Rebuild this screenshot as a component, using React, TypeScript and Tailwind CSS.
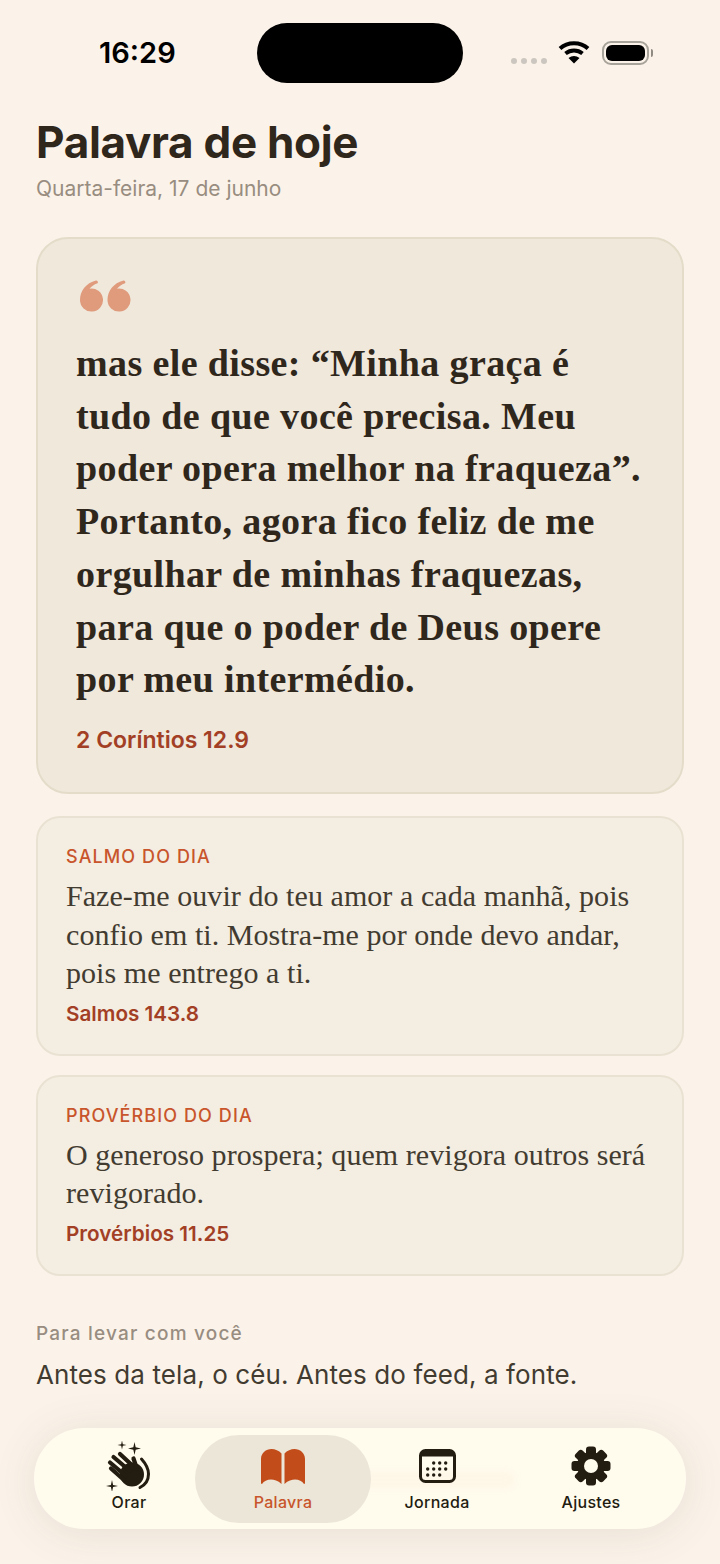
import React from 'react';

const SANS = 'font-[Inter,"Liberation_Sans",sans-serif]';
const SERIF = 'font-["Liberation_Serif",serif]';

function WifiIcon() {
  return (
    <svg width="32" height="24" viewBox="0 0 32 24" fill="none" className="text-black">
      <path d="M2 8.500C9.500 1.500 22.500 1.500 30 8.500" stroke="currentColor" strokeWidth="4" />
      <path d="M7.500 13.500C12.500 9.500 19.500 9.500 24.500 13.500" stroke="currentColor" strokeWidth="4" />
      <path d="M10.500 18L16 23.500L21.500 18C18 15.300 14 15.300 10.500 18Z" fill="currentColor" />
    </svg>
  );
}

function Battery() {
  return (
    <div className="flex items-center gap-[2px]">
      <div className="w-[47px] h-[24px] rounded-[9px] border-2 border-[#a8a39a] p-[2px]">
        <div className="w-full h-full rounded-[6px] bg-black" />
      </div>
      <div className="w-[2px] h-[8px] rounded-r-full bg-[#8f8a82]" />
    </div>
  );
}

function StatusBar() {
  return (
    <div className="flex items-start pt-[23px]">
      <div className={`w-[257px] pl-[99px] pt-[12px] text-[29px] leading-[36px] font-semibold text-black ${SANS}`}>16:29</div>
      <div className="w-[206px] h-[60px] rounded-[30px] bg-black" />
      <div className="flex items-center pl-[48px] pt-[18px]">
        <div className="flex gap-[4px] mt-[16px]">
          <span className="w-[6px] h-[6px] rounded-full bg-[#cbc6bf]" />
          <span className="w-[6px] h-[6px] rounded-full bg-[#cbc6bf]" />
          <span className="w-[6px] h-[6px] rounded-full bg-[#cbc6bf]" />
          <span className="w-[6px] h-[6px] rounded-full bg-[#cbc6bf]" />
        </div>
        <div className="ml-[11px] mr-[12px] -mt-[2px]"><WifiIcon /></div>
        <Battery />
      </div>
    </div>
  );
}

function QuoteMark() {
  const mark = 'M16 0.500C6 3 0 11 0 20A11.500 11.500 0 1 0 9.500 8.700C11 6.500 14 4.500 17.500 3.200C18.500 2.500 17.500 0.200 16 0.500Z';
  return (
    <svg width="51" height="32" viewBox="0 0 51 32" className="text-[#e09a7c]" aria-hidden="true">
      <path d={mark} fill="currentColor" />
      <path d={mark} fill="currentColor" transform="translate(27.500 0)" />
    </svg>
  );
}

function Sparkle({ x, y, r }: { x: number; y: number; r: number }) {
  const s = r * 0.18;
  return (
    <path
      d={`M${x} ${y - r}L${x + s} ${y - s}L${x + r} ${y}L${x + s} ${y + s}L${x} ${y + r}L${x - s} ${y + s}L${x - r} ${y}L${x - s} ${y - s}Z`}
      fill="currentColor"
    />
  );
}

function HandsIcon() {
  return (
    <svg width="46" height="50" viewBox="0 0 46 50" fill="none" className="text-[#231c10]">
      <Sparkle x={16} y={4} r={4.500} />
      <Sparkle x={28.500} y={7.500} r={6.500} />
      <Sparkle x={6} y={45} r={6} />
      <circle cx="26" cy="33.500" r="12" fill="currentColor" />
      <g stroke="currentColor" strokeWidth="4.200" strokeLinecap="round">
        <path d="M5 27.500L18 39" />
        <path d="M4 21.500L20 35" />
        <path d="M7.500 16L24 30" />
        <path d="M14 13L28 26" />
        <path d="M27.500 17.500L31 28" />
      </g>
      <path d="M35.500 18C40 23 42.500 28 42.500 33C42.500 39 39 44 34 46.500" stroke="currentColor" strokeWidth="3" strokeLinecap="round" />
    </svg>
  );
}

function BookIcon() {
  const page = 'M0 34.500V10C0 4 5 0 10.500 0C14 0 18 1.500 20.500 4.500V35C17 31.500 13 30.500 10 30.500C6 30.500 3 32 1 35Z';
  return (
    <svg width="44" height="35" viewBox="0 0 44 35" className="mb-[7px] text-[#c24c1a]">
      <path d={page} fill="currentColor" />
      <path d={page} fill="currentColor" transform="translate(44 0) scale(-1 1)" />
    </svg>
  );
}

function CalendarIcon() {
  const dots: [number, number][] = [
    [14.700, 14], [20.700, 14], [26.700, 14],
    [8.700, 20], [14.700, 20], [20.700, 20], [26.700, 20],
    [8.700, 26], [14.700, 26], [20.700, 26],
  ];
  return (
    <svg width="37" height="34" viewBox="0 0 37 34" className="mb-[8px] text-[#231c10]">
      <rect x="1.500" y="1.500" width="34" height="31" rx="5" fill="none" stroke="currentColor" strokeWidth="3" />
      <path d="M1 7.500V6C1 3 3 1 6 1H31C34 1 36 3 36 6V7.500Z" fill="currentColor" />
      {dots.map(([x, y]) => (
        <circle key={`${x}-${y}`} cx={x} cy={y} r="1.700" fill="currentColor" />
      ))}
    </svg>
  );
}

function GearIcon() {
  const teeth = [0, 45, 90, 135];
  return (
    <svg width="40" height="40" viewBox="0 0 40 40" className="mb-[5px] text-[#231c10]">
      {teeth.map((a) => (
        <rect key={a} x="15" y="0.500" width="10" height="39" rx="3" fill="currentColor" transform={`rotate(${a} 20 20)`} />
      ))}
      <circle cx="20" cy="20" r="14" fill="currentColor" />
      <circle cx="20" cy="20" r="7" fill="#fffbed" />
    </svg>
  );
}

function NavItem({ label, icon, active }: { label: string; icon: React.ReactNode; active?: boolean }) {
  return (
    <div className={`relative flex flex-col items-center justify-end h-[88px] pb-[11px] rounded-[44px] ${active ? '-mx-[11px] bg-[#ebe6d8] text-[#c8552b]' : 'text-[#231c10]'} ${SANS}`}>
      <div className="h-[50px] flex items-end justify-center pb-[1px]">{icon}</div>
      <span className="text-[16px] leading-[20px] font-medium tracking-[0.3px]">{label}</span>
    </div>
  );
}

function BottomNav() {
  return (
    <div className="absolute left-[34px] top-[1428px] w-[652px] h-[101px] rounded-[50px] bg-[#fffbed] shadow-[0_4px_44px_rgba(90,70,40,0.12)] pt-[7px] px-[18px] grid grid-cols-4">
      <div className="absolute left-[180px] top-[46px] w-[300px] h-[12px] rounded-full bg-[#f6c9a8]/10 blur-[5px]" />
      <NavItem label="Orar" icon={<HandsIcon />} />
      <NavItem label="Palavra" icon={<BookIcon />} active />
      <NavItem label="Jornada" icon={<CalendarIcon />} />
      <NavItem label="Ajustes" icon={<GearIcon />} />
    </div>
  );
}

function DailyCard({ title, text, source }: { title: string; text: React.ReactNode; source: string }) {
  return (
    <div className="rounded-[24px] border-2 border-[#e9e2d2] bg-[#f4ede2] pl-[28px] pt-[26px] pb-[26px]">
      <div className={`text-[18px] leading-[26px] font-medium tracking-[1.1px] text-[#c8552b] ${SANS}`}>{title}</div>
      <p className={`mt-[7px] text-[30px] leading-[38.5px] tracking-[0.06px] text-[#423b30] ${SERIF}`}>{text}</p>
      <div className={`mt-[7px] text-[20.7px] leading-[28px] font-semibold text-[#a23f25] ${SANS}`}>{source}</div>
    </div>
  );
}

export default function App() {
  return (
    <div className="relative w-[720px] h-[1564px] overflow-hidden bg-[#fbf3ea]">
      <StatusBar />
      <div className="px-[36px]">
        <h1 className={`mt-[33px] text-[44px] leading-[52px] font-bold text-[#30271c] tracking-[-0.3px] ${SANS}`}>Palavra de hoje</h1>
        <div className={`mt-[8px] text-[21px] leading-[26px] text-[#988d80] ${SANS}`}>Quarta-feira, 17 de junho</div>

        <div className="mt-[35px] h-[557px] rounded-[32px] border-2 border-[#e4dcc9] bg-[#efe8db] pl-[38px] pt-[41px]">
          <div className="h-[57px] pl-[4px]"><QuoteMark /></div>
          <p className={`text-[38px] leading-[52.7px] tracking-[0.38px] font-bold text-[#30271c] ${SERIF}`}>
            mas ele disse: “Minha graça é<br />
            tudo de que você precisa. Meu<br />
            poder opera melhor na fraqueza”.<br />
            Portanto, agora fico feliz de me<br />
            orgulhar de minhas fraquezas,<br />
            para que o poder de Deus opere<br />
            por meu intermédio.
          </p>
          <div className={`mt-[19px] text-[23px] leading-[30px] font-semibold text-[#a23f25] ${SANS}`}>2 Coríntios 12.9</div>
        </div>

        <div className="mt-[22px] flex flex-col gap-[19px]">
          <DailyCard
            title="SALMO DO DIA"
            text={<>Faze-me ouvir do teu amor a cada manhã, pois<br />confio em ti. Mostra-me por onde devo andar,<br />pois me entrego a ti.</>}
            source="Salmos 143.8"
          />
          <DailyCard
            title="PROVÉRBIO DO DIA"
            text={<>O generoso prospera; quem revigora outros será<br />revigorado.</>}
            source="Provérbios 11.25"
          />
        </div>

        <div className={`mt-[45px] text-[19px] leading-[26px] font-medium tracking-[1.2px] text-[#988d80] ${SANS}`}>Para levar com você</div>
        <div className={`mt-[10px] text-[26px] leading-[36px] tracking-[0.1px] text-[#423b30] ${SANS}`}>Antes da tela, o céu. Antes do feed, a fonte.</div>
      </div>
      <BottomNav />
    </div>
  );
}
